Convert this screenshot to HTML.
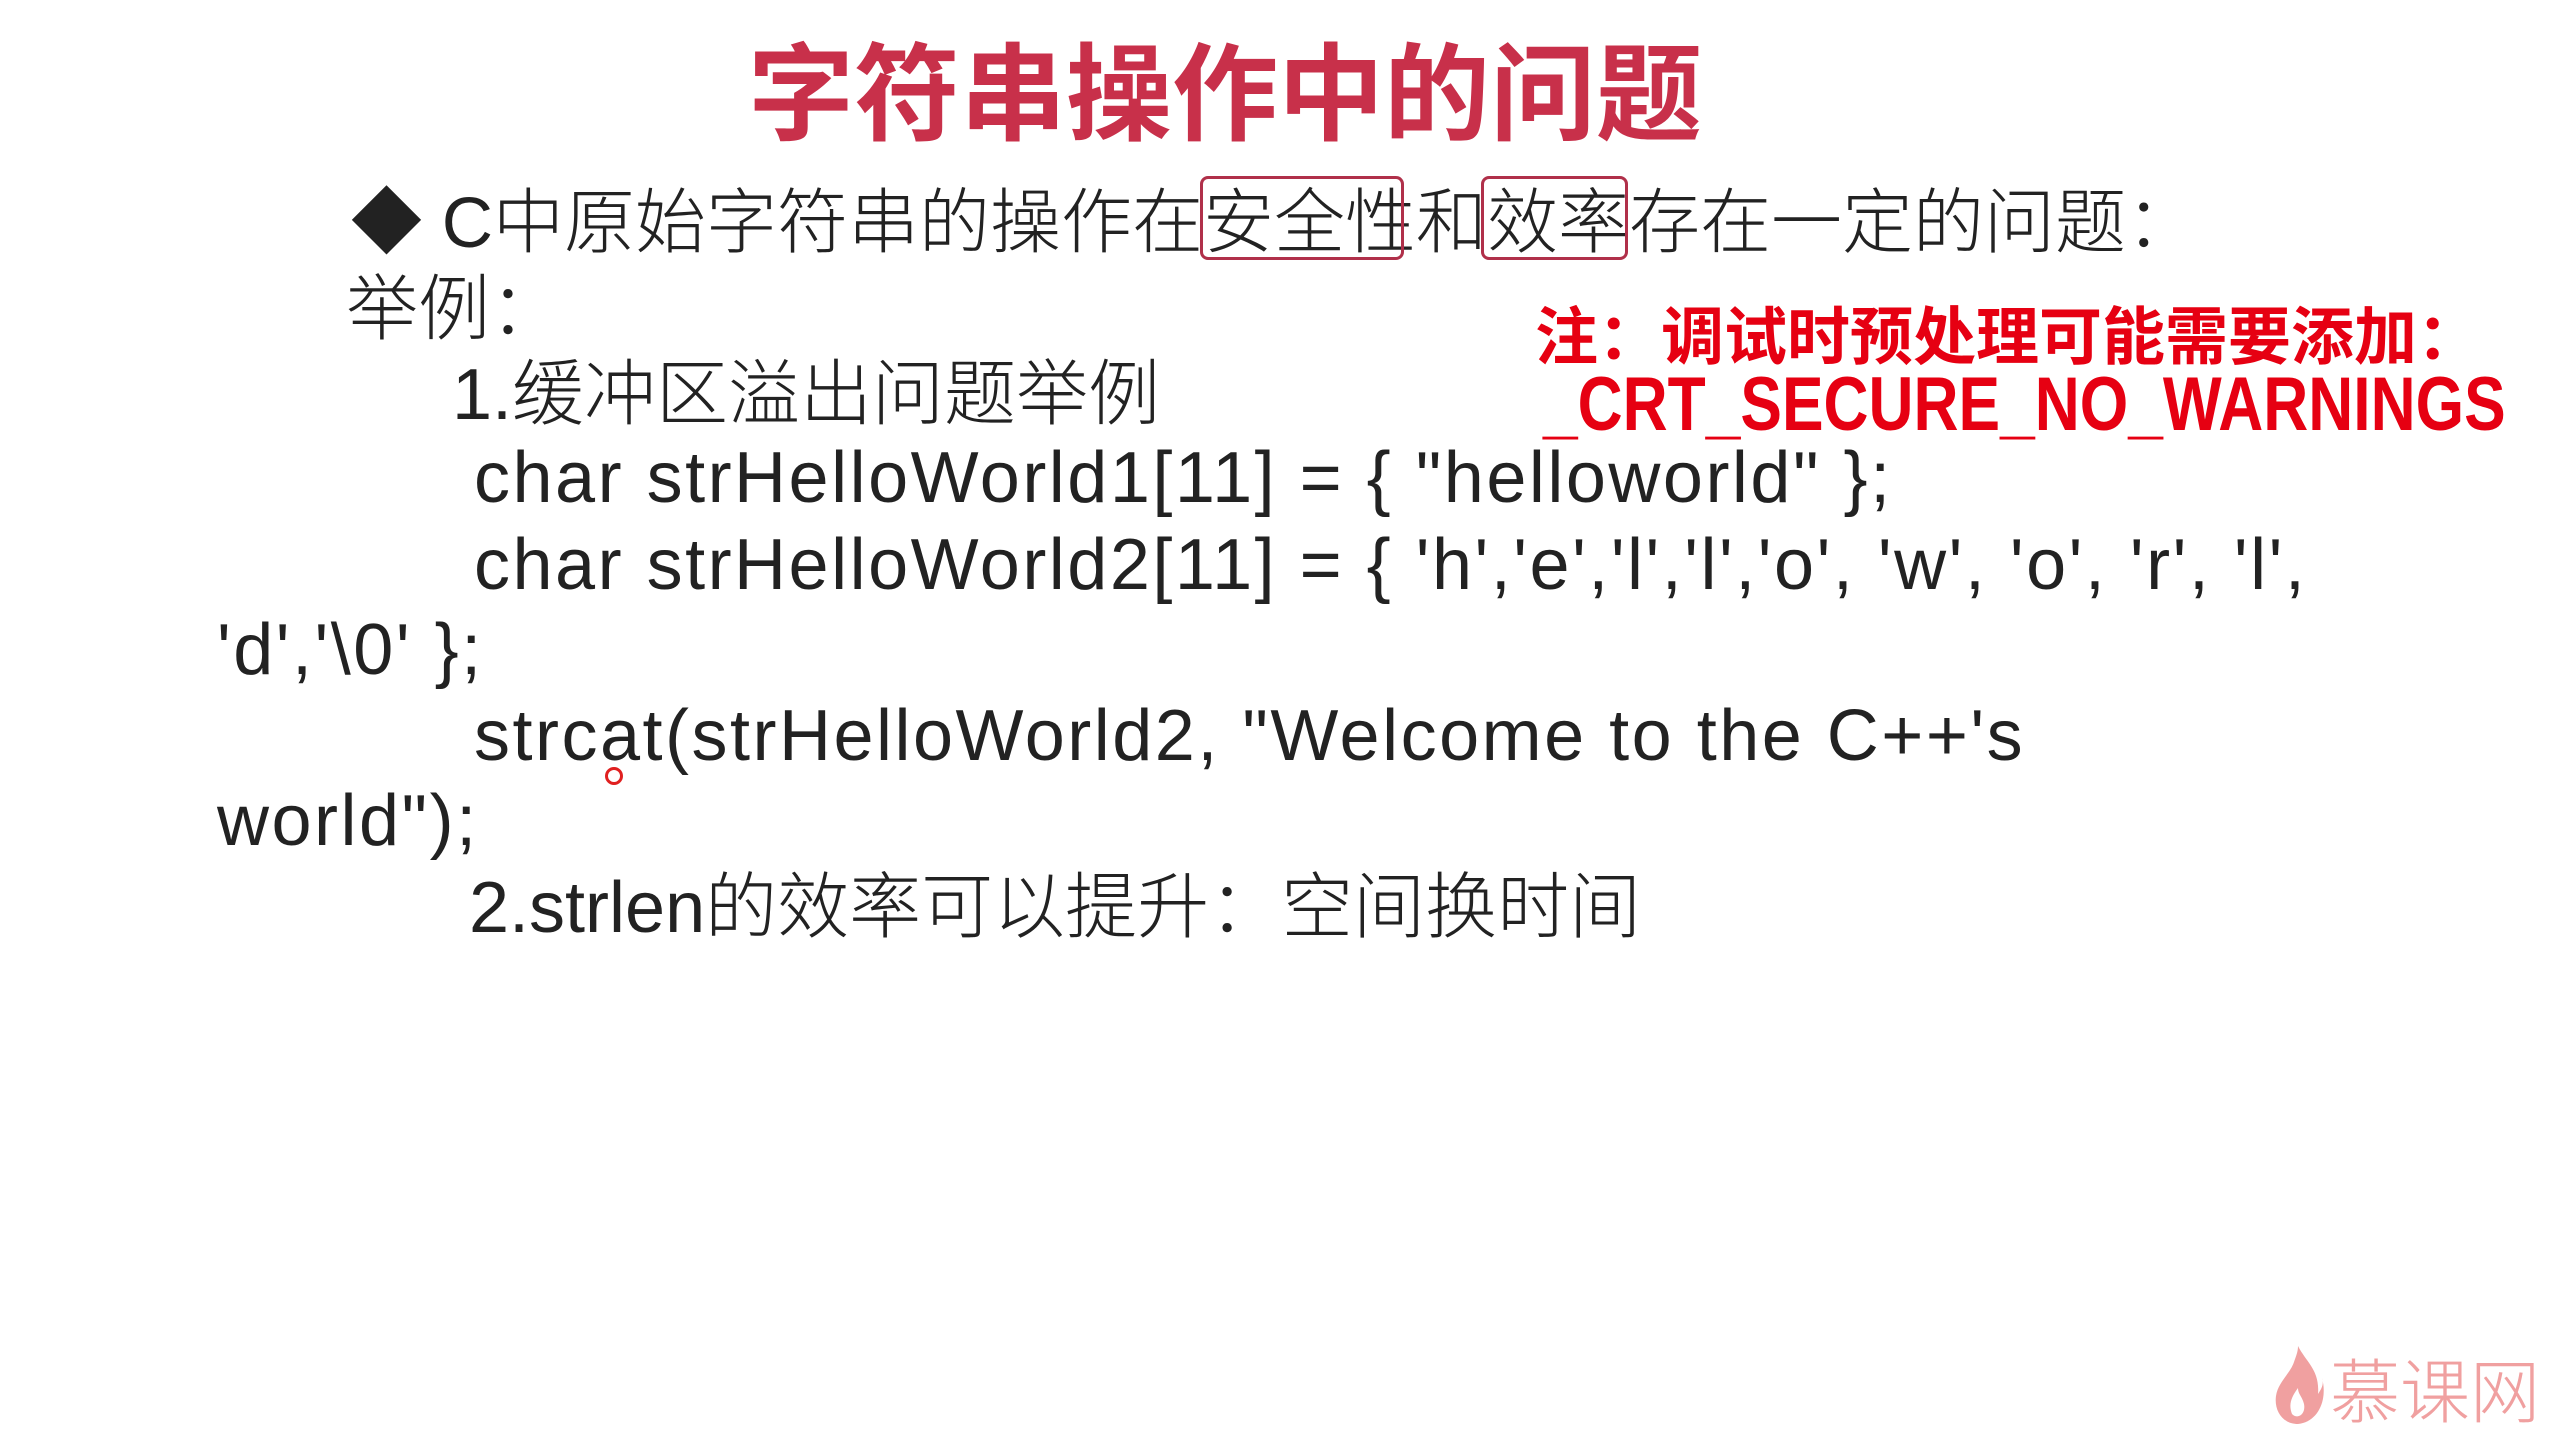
<!DOCTYPE html>
<html><head><meta charset="utf-8"><style>
html,body{margin:0;padding:0;background:#fff;}
body{width:2560px;height:1440px;position:relative;overflow:hidden;font-family:"Liberation Sans","Noto Sans CJK SC",sans-serif;color:#222;}
.l{position:absolute;white-space:pre;font-size:72px;line-height:86px;font-weight:300;}
.c{letter-spacing:2.5px;}
.t{position:absolute;left:748px;top:26px;font-size:106px;line-height:120px;font-weight:700;color:#c8304a;white-space:pre;font-family:"Noto Sans CJK SC",sans-serif;}
.n{position:absolute;white-space:pre;color:#e60012;font-weight:700;font-size:63px;line-height:72px;}
.box{position:absolute;border:3px solid #b0304a;border-radius:8px;}
</style></head><body>
<div class="t">字符串操作中的问题</div>
<div class="l" style="left:351px;top:181px;font-size:71px;">◆ C中原始字符串的操作在安全性和效率存在一定的问题：</div>
<div class="box" style="left:1200px;top:176px;width:198px;height:78px;"></div>
<div class="box" style="left:1481px;top:176px;width:141px;height:78px;"></div>
<div class="l" style="left:346px;top:267px;">举例：</div>
<div class="l" style="left:452px;top:352px;">1.缓冲区溢出问题举例</div>
<div class="l c" style="left:474px;top:435px;">char strHelloWorld1[11] = { "helloworld" };</div>
<div class="l c" style="left:474px;top:522px;">char strHelloWorld2[11] = { 'h','e','l','l','o', 'w', 'o', 'r', 'l',</div>
<div class="l c" style="left:217px;top:607px;">'d','\0' };</div>
<div class="l c" style="left:474px;top:693px;">strcat(strHelloWorld2, "Welcome to the C++'s</div>
<div class="l c" style="left:217px;top:778px;">world");</div>
<div class="l" style="left:469px;top:865px;">2.strlen的效率可以提升：空间换时间</div>
<div class="n" style="left:1535px;top:297px;font-family:'Noto Sans CJK SC',sans-serif;">注：调试时预处理可能需要添加：</div>
<div class="n" style="left:1543px;top:362px;font-size:76px;line-height:86px;transform:scaleX(0.82);transform-origin:0 0;">_CRT_SECURE_NO_WARNINGS</div>
<div style="position:absolute;left:605px;top:767px;width:12px;height:12px;border:3px solid #e02020;border-radius:50%;"></div>
<svg style="position:absolute;left:2272px;top:1344px" width="52" height="82" viewBox="0 0 52 82"><path d="M26 2 C34 18 48 26 46 50 C50 44 52 40 50 34 C56 56 46 78 26 80 C10 80 2 66 4 52 C6 38 18 30 22 18 C24 12 26 8 26 2 Z M26 44 C20 52 16 60 20 70 C26 76 34 70 32 60 C30 52 26 50 26 44Z" fill="#f0a0a0" fill-rule="evenodd"/></svg>
<div style="position:absolute;left:2330px;top:1348px;font-size:70px;line-height:80px;color:#f0a0a0;font-family:'Noto Sans CJK SC',sans-serif;font-weight:300;">慕课网</div>
</body></html>
